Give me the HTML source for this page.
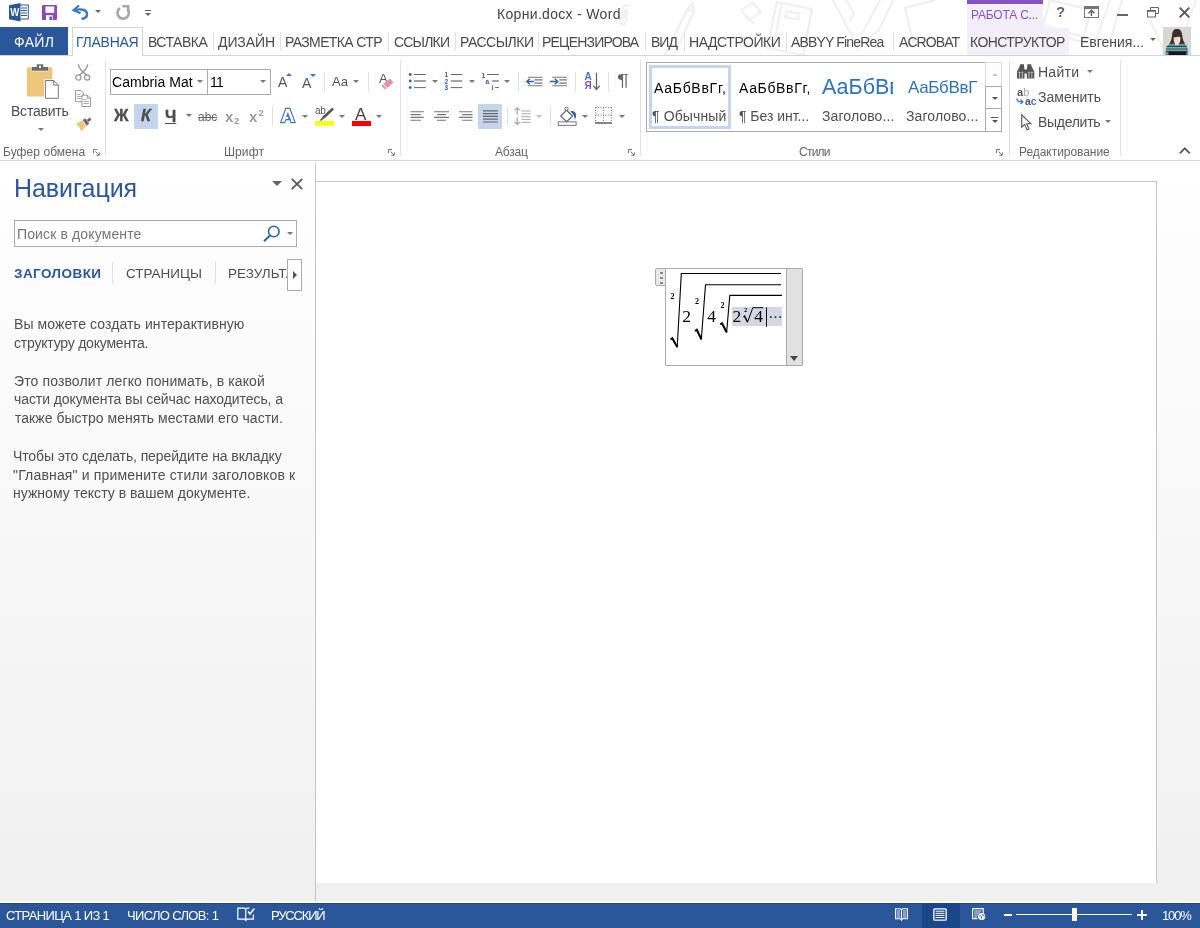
<!DOCTYPE html>
<html lang="ru">
<head>
<meta charset="utf-8">
<title>Корни.docx - Word</title>
<style>
*{box-sizing:border-box;margin:0;padding:0}
html,body{width:1200px;height:928px;overflow:hidden;background:#fff}
body{position:relative;font-family:"Liberation Sans",sans-serif;font-size:12px;color:#4e4e4e;-webkit-font-smoothing:antialiased}
.a{position:absolute}
.t{position:absolute;white-space:nowrap;line-height:1;will-change:transform}
svg{position:absolute;overflow:visible;will-change:transform}
/* title bar */
#title{left:0;top:0;width:1200px;height:28px;background:#fff}
#tabs{left:0;top:28px;width:1200px;height:27px;background:#fff}
#file{left:0;top:27px;width:68px;height:28px;background:#2b579a}
#home{z-index:2;left:72px;top:27px;width:71px;height:29px;background:#fff;border:1px solid #d4d4d4;border-bottom:none}
.tab{font-size:14px;color:#4a4a4a;top:35px}
.tsep{position:absolute;top:32px;width:1px;height:19px;background:#e1e1e1}
#ctxhead{left:967px;top:0;width:76px;height:28px;background:#f3effa;border-top:4px solid #8653c5}
#ctxtab{left:967px;top:28px;width:102px;height:27px;background:#f3effa}
/* ribbon */
#ribbon{left:0;top:55px;width:1200px;height:106px;background:#fff;border-top:1px solid #d4d4d4;border-bottom:1px solid #d4d4d4}
.gsep{position:absolute;top:60px;width:1px;height:96px;background:#e1e1e1}
.bsep{position:absolute;width:1px;height:20px;background:#e1e1e1}
.glabel{font-size:12px;color:#666;top:146px}
.hl{position:absolute;background:#c5d5ed}
.box{position:absolute;border:1px solid #ababab;background:#fff}
.arr{position:absolute;width:0;height:0;border-left:3px solid transparent;border-right:3px solid transparent;border-top:3px solid #777}
/* nav */
#nav{left:0;top:161px;width:315px;height:740px;background:linear-gradient(#fff 0,#f0f0f0 100%)}
#navline{left:315px;top:163px;width:1px;height:738px;background:#c6c6c6}
#docbg{left:316px;top:161px;width:884px;height:740px;background:linear-gradient(#fff 0,#f0f0f0 100%)}
#page{left:316px;top:181px;width:841px;height:702px;background:#fff;border-top:1px solid #c6c6c6;border-right:1px solid #c6c6c6}
.np{font-size:14px;color:#505050;left:14px}
/* status */
#status{left:0;top:903px;width:1200px;height:25px;background:#2b579a;border-top:1px solid #1f4a8d}
.st{font-size:13px;color:#fff;top:909px}
</style>
</head>
<body>
<!-- TITLE BAR -->
<div class="a" id="title"></div>
<div class="a" id="tabs"></div>
<svg style="left:600px;top:0" width="600" height="55" viewBox="600 0 600 55"><g fill="none" stroke="#efefef" stroke-width="2" stroke-linecap="round" stroke-linejoin="round">
<path d="M629 6c-3-2-6 0-6.500 3l-2 12c-.5 4 4 5 5 1l2-11c.3-2-2-2.500-2.400-.5l-1.500 8"/>
<path d="M692 3l-5 7l-22 45M692 3l2 8l-20 44M687 10l7 1"/>
<path d="M741 10l12-7l8 9l-12 8zM745 15l8 8"/>
<path d="M777 2l35 7l-9 46l-36-7zM782 3l-9 46M786 11l13 2.500l-1 6l-13-2.500z"/>
<path d="M833 0l22 42M846 0l8 14l-4 6M855 42l4 8"/>
<path d="M880 0l-18 34M893 0l-14 30l-15 12"/>
<path d="M905 8l30-8M905 8l8 34l24-6"/>
<path d="M1050 0l-8 30l40 12l9-32zM1046 26l38 11"/>
<path d="M1110 0l-14 40M1122 0l-12 42"/>
<path d="M1150 20l14 30M1196 0l-10 28"/>
</g></svg>
<div class="a" id="ctxhead"></div>
<div class="a" id="ctxtab"></div>
<span class="t" id="ttl" style="left:496.5px;top:6.9px;font-size:14px;color:#444;letter-spacing:0.32px">Корни.docx - Word</span>
<span class="t" id="ctxh" style="left:971.0px;top:9.0px;font-size:12px;color:#8653c5;letter-spacing:-0.20px">РАБОТА С...</span>

<!-- title icons -->
<svg style="left:9px;top:3px" width="20" height="19" viewBox="0 0 20 19"><rect x="10" y="2" width="9.3" height="14" fill="#fff" stroke="#2b579a" stroke-width="1"/><g stroke="#2b579a" stroke-width="1"><path d="M12 5h6M12 7.5h6M12 10h6M12 12.500h6"/></g><path d="M0 2.200L11.500 0v18.400L0 16.200z" fill="#2b579a"/><text x="1.300" y="13.200" font-family="Liberation Sans, sans-serif" font-weight="bold" font-size="10.500" fill="#fff" textLength="9" lengthAdjust="spacingAndGlyphs">W</text></svg>
<svg style="left:42px;top:5px" width="15" height="15" viewBox="0 0 15 15"><path d="M0 1a1 1 0 0 1 1-1h13a1 1 0 0 1 1 1v13a1 1 0 0 1-1 1H1a1 1 0 0 1-1-1z" fill="#8a4bb5"/><rect x="3.500" y="1.500" width="8.700" height="6.300" fill="#fff"/><rect x="4" y="10.200" width="6.700" height="4.800" fill="#fff"/><rect x="7.300" y="11.500" width="2.700" height="3.500" fill="#8a4bb5"/></svg>
<svg style="left:72px;top:5px" width="18" height="15" viewBox="0 0 18 15"><path d="M7 0.500L1.500 5.200L8.500 8.300" fill="none" stroke="#3a78c3" stroke-width="2.200"/><path d="M2.500 5c6-1.500 12.500-.5 12.500 4.200c0 3-2.500 4.300-5.500 4.600" fill="none" stroke="#3a78c3" stroke-width="2.400"/></svg>
<div class="arr" style="left:95px;top:10px;border-top-color:#666"></div>
<svg style="left:115px;top:5px" width="16" height="15" viewBox="0 0 16 15"><path d="M5 3.200A5.700 5.700 0 1 0 12.300 4" fill="none" stroke="#a6a6a6" stroke-width="2.600"/><path d="M7.500 1.300h5.800v5.800" fill="none" stroke="#a6a6a6" stroke-width="2.400"/></svg>
<div class="a" style="left:145px;top:10px;width:6px;height:1px;background:#666"></div>
<div class="arr" style="left:145px;top:13px;border-top-color:#666"></div>
<!-- window controls -->
<span class="t" id="w_help" style="left:1056px;top:4px;font-size:15px;font-weight:bold;color:#666">?</span>
<svg style="left:1084px;top:6px" width="15" height="12" viewBox="0 0 15 12"><rect x=".5" y=".5" width="14" height="11" fill="none" stroke="#777"/><rect x="1" y="1" width="13" height="2" fill="#777"/><path d="M7.500 10V4.500M4.500 7.300L7.500 4.300L10.500 7.300" fill="none" stroke="#666" stroke-width="1.500"/></svg>
<div class="a" style="left:1117px;top:14px;width:11px;height:2px;background:#666"></div>
<svg style="left:1147px;top:7px" width="12" height="11" viewBox="0 0 12 11"><path d="M3.500 3V.500h8v6h-2.500" fill="none" stroke="#666"/><rect x=".5" y="3.500" width="8" height="6.500" fill="none" stroke="#666"/><path d="M0 4h9" stroke="#666" stroke-width="1.500"/></svg>
<svg style="left:1179px;top:7px" width="11" height="11" viewBox="0 0 11 11"><path d="M.7.700l9.600 9.600M10.300.700L.7 10.300" stroke="#555" stroke-width="1.800"/></svg>
<div class="arr" style="left:1150px;top:38px;border-top-color:#666"></div>
<!-- avatar -->
<svg style="left:1162.500px;top:27px" width="28" height="28" viewBox="0 0 28 28"><rect width="28" height="28" fill="#d8d7d4"/><path d="M14 1.800c-3.500 0-4.800 3-5 7c-.2 3.500-1.200 5.800-2.700 7.800l4 1h8l3.700-1c-1.600-2.200-2.400-4.500-2.700-7.800c-.4-4-1.800-7-5.300-7z" fill="#3b2f2b"/><path d="M10.800 10.200c1.500-.8 4-1 6.500-.2c.3 2.500 0 5-1 6.300l-1 2h-3l-.8-2.300c-.8-1.800-.9-3.800-.7-5.800z" fill="#f1dcd1"/><path d="M9.500 8.500c1-2.500 3-3.500 5-3.300c2 .2 3.300 1.800 3.600 4.500c-1.800-.3-3.300-.2-4.300.3c-1.300.6-2.800.6-4.300-1.500z" fill="#3b2f2b"/><path d="M2.500 28c0-5 .8-9 3.500-11l4.500-.6c1 2.200 6.500 2.200 7.800 0l4.200.8c2 1.800 2.500 6 2.500 10.800z" fill="#4f9aa0"/><path d="M3.500 19.500h20M3 22h21.500M2.800 24.300h22" stroke="#3a3f4a" stroke-width="1.100"/><path d="M4 20.800h19.500M3 23.200h21.500" stroke="#9ad4d4" stroke-width=".6"/><path d="M5.500 28v-3.500h17.800v3.500z" fill="#14161a"/></svg>

<!-- TABS -->
<div class="a" id="file"></div>
<span class="t tab" id="tb0" style="left:13.5px;color:#fff;letter-spacing:0.33px">ФАЙЛ</span>
<div class="a" id="home"></div>
<span class="t tab" id="tb1" style="z-index:3;left:75.5px;color:#2b579a;letter-spacing:-0.25px">ГЛАВНАЯ</span>
<span class="t tab" id="tb2" style="left:147.5px;letter-spacing:-0.50px">ВСТАВКА</span>
<span class="t tab" id="tb3" style="left:218.0px;letter-spacing:-0.10px">ДИЗАЙН</span>
<span class="t tab" id="tb4" style="left:284.5px;letter-spacing:-0.64px">РАЗМЕТКА СТР</span>
<span class="t tab" id="tb5" style="left:393.5px;letter-spacing:-0.80px">ССЫЛКИ</span>
<span class="t tab" id="tb6" style="left:459.5px;letter-spacing:-0.50px">РАССЫЛКИ</span>
<span class="t tab" id="tb7" style="left:542.0px;letter-spacing:-0.80px">РЕЦЕНЗИРОВА</span>
<span class="t tab" id="tb8" style="left:650.5px;letter-spacing:-1.00px">ВИД</span>
<span class="t tab" id="tb9" style="left:688.5px;letter-spacing:-0.44px">НАДСТРОЙКИ</span>
<span class="t tab" id="tb10" style="left:790.5px;letter-spacing:-0.83px">ABBYY FineRea</span>
<span class="t tab" id="tb11" style="left:898.5px;letter-spacing:-0.92px">ACROBAT</span>
<span class="t tab" id="tb12" style="left:969.5px;letter-spacing:-0.60px">КОНСТРУКТОР</span>
<span class="t tab" id="tb13" style="left:1080.0px;letter-spacing:-0.01px">Евгения...</span>

<div class="tsep" style="left:213px"></div>
<div class="tsep" style="left:280px"></div>
<div class="tsep" style="left:388px"></div>
<div class="tsep" style="left:455px"></div>
<div class="tsep" style="left:538px"></div>
<div class="tsep" style="left:645px"></div>
<div class="tsep" style="left:684px"></div>
<div class="tsep" style="left:786px"></div>
<div class="tsep" style="left:893px"></div>

<!-- RIBBON -->
<div class="a" id="ribbon"></div>
<div class="gsep" style="left:105px"></div>
<div class="gsep" style="left:400px"></div>
<div class="gsep" style="left:640px"></div>
<div class="gsep" style="left:1009px"></div>
<div class="gsep" style="left:1120px"></div>
<!-- clipboard group -->
<span class="t" id="r_paste" style="left:10.5px;top:103.9px;font-size:14px;letter-spacing:-0.22px">Вставить</span>
<div class="arr" style="left:38px;top:128px"></div>
<span class="t glabel" id="g_clip" style="left:2.5px;letter-spacing:0.06px">Буфер обмена</span>
<!-- clipboard icons -->
<svg style="left:27px;top:64px" width="33" height="36" viewBox="0 0 33 36"><rect x="0" y="3.200" width="25.400" height="29.200" rx="1.200" fill="#edc67a"/><path d="M5 3h16v4.200H5z" fill="#6a6a6a"/><path d="M9.700 0.300h6.600v3H9.700z" fill="#6a6a6a"/><rect x="12" y="1.800" width="2" height="2" fill="#fff"/><path d="M4.700 7.200h16.600" stroke="#f7e6c4" stroke-width="1"/><path d="M17 15.300h10.500l5 5V35.500H17z" fill="#fff"/><path d="M18.400 16.500h8.300l4.600 4.600v13.200H18.400z" fill="#fff" stroke="#777" stroke-width="1"/><path d="M26.700 16.500v4.600h4.600" fill="none" stroke="#777" stroke-width="1"/></svg>
<svg style="left:75px;top:64px" width="16" height="17" viewBox="0 0 16 17"><path d="M3.300 0.300C3.600 4 5.500 6.500 12 11.500M12.700 0.300C12.400 4 10.500 6.500 4 11.500" fill="none" stroke="#9a9a9a" stroke-width="1.500"/><circle cx="3.400" cy="13.500" r="2.600" fill="none" stroke="#9a9a9a" stroke-width="1.300"/><circle cx="12.100" cy="13.500" r="2.600" fill="none" stroke="#9a9a9a" stroke-width="1.300"/></svg>
<svg style="left:75px;top:90px" width="17" height="17" viewBox="0 0 17 17"><path d="M.5.500h5.500l2.500 2.500v8.800H.5z" fill="#fff" stroke="#9a9a9a"/><path d="M2 4.500h3M2 6.500h5M2 8.500h4" stroke="#b0b0b0"/><path d="M7 5.200h5.500l3 3v8.300H7z" fill="#fff" stroke="#9a9a9a"/><path d="M12.500 5.200v3h3" fill="none" stroke="#9a9a9a"/><path d="M8.500 9.500h3M8.500 11.500h5.500M8.500 13.500h5.500" stroke="#b0b0b0"/></svg>
<svg style="left:75px;top:117px" width="17" height="15" viewBox="0 0 17 15"><path d="M1 7l6.200-3.700l3.800 5.400L6.500 14.300c-1.500-2.800-3-5.300-5.500-7.300z" fill="#edc67a"/><path d="M7.500 3l2.800-1.800l4 5.500l-2.800 2z" fill="#6a6a6a"/><path d="M11.800 2.700l3-2.200l1.700 2.300l-3 2.200z" fill="#6a6a6a"/><path d="M7.300 3.300l3.800 5.300" stroke="#fff" stroke-width=".8"/></svg>
<!-- font group -->
<div class="box" style="left:110px;top:69px;width:98px;height:26px"></div>
<div class="box" style="left:207px;top:69px;width:64px;height:26px"></div>
<span class="t" id="r_font" style="left:112.0px;top:75.2px;font-size:14px;color:#000;letter-spacing:0.05px">Cambria Mat</span>
<div class="arr" style="left:197px;top:80px"></div>
<span class="t" id="r_size" style="left:210px;top:75.2px;font-size:14px;color:#000;letter-spacing:-0.80px">11</span>
<div class="arr" style="left:260px;top:80px"></div>
<div class="bsep" style="left:324px;top:72px"></div>
<div class="bsep" style="left:368px;top:72px"></div>
<div class="hl" style="left:134px;top:104px;width:24px;height:25px"></div>
<span class="t" id="r_b" style="left:114.0px;top:108.3px;font-size:16px;font-weight:bold;-webkit-text-stroke:.35px #4e4e4e;letter-spacing:0.00px">Ж</span>
<span class="t" id="r_i" style="left:140.5px;top:108.3px;font-size:16px;font-weight:bold;-webkit-text-stroke:.35px #4e4e4e;font-style:italic;letter-spacing:0.00px">К</span>
<span class="t" id="r_u" style="left:165px;top:109px;font-size:16px;font-weight:bold;-webkit-text-stroke:.35px #4e4e4e;text-decoration:underline">Ч</span>
<div class="arr" style="left:186px;top:114px"></div>
<span class="t" id="r_abc" style="left:198.0px;top:111.4px;font-size:12px;text-decoration:line-through;color:#666;letter-spacing:0.00px">abc</span>
<span class="t" id="r_sub" style="left:225.0px;top:108.9px;font-size:15px;font-weight:bold;color:#999;letter-spacing:0.40px">x<span style="font-size:9px;position:relative;top:2px;left:.5px">2</span></span>
<span class="t" id="r_sup" style="left:249.0px;top:108.9px;font-size:15px;font-weight:bold;color:#999;letter-spacing:1.00px">x<span style="font-size:9px;position:relative;top:-6px;left:.5px">2</span></span>
<div class="bsep" style="left:272px;top:106px"></div>
<span class="t glabel" id="g_font" style="left:224.0px;letter-spacing:0.10px">Шрифт</span>
<!-- font icons -->
<span class="t" id="i_grow" style="left:278.3px;top:75.3px;font-size:14px;color:#555;letter-spacing:0.00px">A</span>
<svg style="left:286px;top:73px" width="6" height="3" viewBox="0 0 6 3"><path d="M0 3L3 0L6 3z" fill="#3a78c3"/></svg>
<span class="t" id="i_shr" style="left:301.5px;top:76.2px;font-size:14px;color:#555;letter-spacing:0.00px">A</span>
<svg style="left:309.500px;top:74px" width="6" height="3" viewBox="0 0 6 3"><path d="M0 0h6L3 3z" fill="#3a78c3"/></svg>
<span class="t" id="i_aa" style="left:332.2px;top:75.0px;font-size:13px;color:#555;letter-spacing:0.20px">Aa</span>
<div class="arr" style="left:353px;top:80px"></div>
<span class="t" id="i_clr" style="left:379.1px;top:72.0px;font-size:13px;color:#555;letter-spacing:0.00px">A</span>
<svg style="left:380px;top:77px" width="14" height="13" viewBox="0 0 14 13"><g transform="rotate(-40 7.500 7)"><rect x="2" y="4.300" width="11" height="5.400" rx="1" fill="#e8909c"/><path d="M4.200 4.300v5.400" stroke="#fff" stroke-width=".9"/></g></svg>
<span class="t" id="i_fx" style="left:280.500px;top:106px;font-size:19px;font-weight:bold;color:#fff;-webkit-text-stroke:2.400px #3a78c3;paint-order:stroke fill">A</span>
<div class="a" style="left:287px;top:116px;width:0;height:0;border-left:2px solid transparent;border-right:2px solid transparent;border-bottom:4px solid #3a78c3"></div>
<div class="arr" style="left:302px;top:115px"></div>
<span class="t" id="i_ab" style="left:315px;top:106px;font-size:10px;color:#555;letter-spacing:-.3px">ab</span>
<svg style="left:315px;top:108px" width="20" height="18" viewBox="0 0 20 18"><path d="M17.300 1.300L8.800 9.300" stroke="#555" stroke-width="2.600" stroke-linecap="round"/><path d="M8.300 9.800L5.500 12.500" stroke="#555" stroke-width="1.600"/><rect x="0" y="13" width="19" height="4.700" fill="#ffff00"/></svg>
<div class="arr" style="left:339px;top:115px"></div>
<span class="t" id="i_fc" style="left:355.0px;top:105.6px;font-size:17px;color:#444;letter-spacing:0.00px">A</span>
<div class="a" style="left:351.500px;top:121px;width:19px;height:4.700px;background:#ff0000"></div>
<div class="arr" style="left:376px;top:115px"></div>
<!-- paragraph group -->
<div class="bsep" style="left:518px;top:72px"></div>
<div class="bsep" style="left:575px;top:72px"></div>
<div class="bsep" style="left:608px;top:72px"></div>
<div class="bsep" style="left:507px;top:106px"></div>
<div class="bsep" style="left:550px;top:106px"></div>
<div class="hl" style="left:478px;top:104px;width:24px;height:25px"></div>
<span class="t glabel" id="g_par" style="left:495.0px;letter-spacing:-0.20px">Абзац</span>
<!-- paragraph icons -->
<svg style="left:408px;top:72px" width="20" height="18" viewBox="0 0 20 18"><g fill="#2b64ad"><circle cx="2.200" cy="2.500" r="1.400"/><circle cx="2.200" cy="9" r="1.400"/><circle cx="2.200" cy="15.600" r="1.400"/></g><path d="M6 2.500h11.800M6 15.600h11.800" stroke="#666" stroke-width="1"/><path d="M6 9h11.800" stroke="#8a8a8a" stroke-width="1.600"/></svg>
<div class="arr" style="left:432px;top:80px"></div>
<svg style="left:444px;top:72px" width="20" height="18" viewBox="0 0 20 18"><g font-family="Liberation Sans, sans-serif" font-size="6.500" font-weight="bold" fill="#2b64ad"><text x=".5" y="5">1</text><text x=".5" y="11.500">2</text><text x=".5" y="18">3</text></g><path d="M6.800 2.500h11.400M6.800 15.600h11.400" stroke="#666" stroke-width="1"/><path d="M6.800 9h11.400" stroke="#8a8a8a" stroke-width="1.600"/></svg>
<div class="arr" style="left:469px;top:80px"></div>
<svg style="left:481px;top:72px" width="20" height="18" viewBox="0 0 20 18"><g font-family="Liberation Sans, sans-serif" font-size="6.500" font-weight="bold" fill="#2b64ad"><text x=".5" y="5.500">1</text><text x="4.500" y="11.500">a</text><text x="10.500" y="18">i</text></g><path d="M6.200 2.500h11.800M14 15.600h4" stroke="#666" stroke-width="1"/><path d="M11.200 9h6.800" stroke="#8a8a8a" stroke-width="1.600"/></svg>
<div class="arr" style="left:503.500px;top:80px"></div>
<svg style="left:526px;top:76px" width="18" height="11" viewBox="0 0 18 11"><path d="M2 1.200h14.500M8.400 3.900h8.100M8.400 7.100h8.100M2 9.800h14.500" stroke="#777" stroke-width="1.100"/><path d="M8 5.500H1M3.800 2.700L.8 5.500l3 2.800" fill="none" stroke="#2b64ad" stroke-width="1.500"/></svg>
<svg style="left:550px;top:76px" width="18" height="11" viewBox="0 0 18 11"><path d="M2.300 1.200h14.600M9.300 3.900h7.600M9.300 7.100h7.600M2.300 9.800h14.600" stroke="#777" stroke-width="1.100"/><path d="M0 5.500H7.500M4.800 2.700l3 2.800l-3 2.800" fill="none" stroke="#2b64ad" stroke-width="1.500"/></svg>
<svg style="left:584px;top:72px" width="17" height="19" viewBox="0 0 17 19"><g font-family="Liberation Sans, sans-serif" font-size="10" font-weight="bold"><text x=".6" y="8.200" fill="#3a78c3">A</text><text x=".6" y="17" fill="#8a4bb5">Я</text></g><path d="M12.500 .8v16.500M9.300 13.800l3.200 3.600l3.200-3.600" fill="none" stroke="#666" stroke-width="1.300"/></svg>
<span class="t" id="i_pil" style="left:617px;top:73px;font-size:16px;color:#666;transform:scaleX(1.4);transform-origin:0 0">¶</span>
<svg style="left:410px;top:111px" width="14" height="10" viewBox="0 0 14 10"><path d="M.5 .8h13.300M.5 3.600h10.300M.5 6.400h13.300M.5 9.200h10.300" stroke="#777" stroke-width="1.100"/></svg>
<svg style="left:434px;top:111px" width="15" height="10" viewBox="0 0 15 10"><path d="M0 .8h15M3 3.600h9M0 6.400h15M3 9.200h9" stroke="#777" stroke-width="1.100"/></svg>
<svg style="left:459px;top:111px" width="14" height="10" viewBox="0 0 14 10"><path d="M.2 .8h13.300M3.200 3.600h10.300M.2 6.400h13.300M3.200 9.200h10.300" stroke="#777" stroke-width="1.100"/></svg>
<svg style="left:483px;top:109.500px" width="15" height="13" viewBox="0 0 15 13"><path d="M0 .8h14.800M0 3.600h14.800M0 6.400h14.800M0 9.200h14.800M0 12h14.800" stroke="#666" stroke-width="1.200"/></svg>
<svg style="left:514px;top:107px" width="17" height="18" viewBox="0 0 17 18"><path d="M3.200 .8v7M.6 3.400L3.200 .8l2.600 2.600M3.200 17.500v-7M.6 14.900l2.600 2.600l2.600-2.600" fill="none" stroke="#a8a8a8" stroke-width="1.300"/><path d="M7.400 4h9.200M7.400 6.800h9.200M7.400 9.700h9.200M7.400 12.400h9.200M7.400 15.300h9.200" stroke="#a8a8a8" stroke-width="1"/></svg>
<div class="arr" style="left:536px;top:115px;border-top-color:#bdbdbd"></div>
<svg style="left:557px;top:106px" width="21" height="20" viewBox="0 0 21 20"><rect x="1.300" y="15.800" width="17.800" height="3.600" fill="#fff" stroke="#777" stroke-width="1"/><path d="M9.500 4.200l6 5.800l-5.800 5.600l-6-5.600z" fill="#fff" stroke="#666" stroke-width="1.200"/><circle cx="9.500" cy="2.800" r="1.700" fill="#fff" stroke="#666" stroke-width="1"/><path d="M9.800 4.200l2.500 2.800" stroke="#666" stroke-width="1"/><path d="M13.300 5.200c3.400-.9 6 1.200 5.800 4.600c-.1 1.700-.7 3-1.500 3.900c.2-2.800-.8-5-2.600-6.500z" fill="#2b64ad"/></svg>
<div class="arr" style="left:582px;top:115px"></div>
<svg style="left:595px;top:107px" width="17" height="17" viewBox="0 0 17 17"><path d="M.5 .5h16M.5 8h16M.5 .5v15M8.400 .5v15M16.300 .5v15" fill="none" stroke="#777" stroke-width="1" stroke-dasharray="1 1.500"/><path d="M0 16h17" stroke="#666" stroke-width="1.600"/></svg>
<div class="arr" style="left:618.500px;top:115px"></div>
<!-- styles group -->
<div class="box" style="left:646px;top:62px;width:356px;height:70px"></div>
<div class="a" style="left:649px;top:65px;width:82px;height:64px;border:3px solid #c5d5ed;background:#fff"></div>
<span class="t" id="s1a" style="left:654.0px;top:81.2px;font-size:14px;color:#000;letter-spacing:0.72px">АаБбВвГг,</span>
<span class="t" id="s1b" style="left:652.0px;top:108.9px;font-size:14px;letter-spacing:0.13px">¶ Обычный</span>
<span class="t" id="s2a" style="left:739.0px;top:81.2px;font-size:14px;color:#000;letter-spacing:0.65px">АаБбВвГг,</span>
<span class="t" id="s2b" style="left:739.0px;top:108.9px;font-size:14px;letter-spacing:-0.03px">¶ Без инт...</span>
<div class="a" style="left:820px;top:70px;width:73px;height:34px;overflow:hidden"><span class="t" id="s3a" style="left:2px;top:7px;font-size:21.5px;color:#2e74b5">АаБбВвГ</span></div>
<span class="t" id="s3b" style="left:822.0px;top:108.9px;font-size:14px;letter-spacing:0.10px">Заголово...</span>
<span class="t" id="s4a" style="left:907.5px;top:78.6px;font-size:17px;color:#2e74b5;letter-spacing:-0.34px">АаБбВвГ</span>
<span class="t" id="s4b" style="left:906.0px;top:108.9px;font-size:14px;letter-spacing:0.10px">Заголово...</span>
<span class="t glabel" id="g_sty" style="left:799.0px;letter-spacing:-0.75px">Стили</span>
<!-- editing group -->
<span class="t" id="e1" style="left:1037.5px;top:64.9px;font-size:14px;letter-spacing:0.25px">Найти</span>
<span class="t" id="e2" style="left:1037.5px;top:89.9px;font-size:14px;letter-spacing:0.01px">Заменить</span>
<span class="t" id="e3" style="left:1037.5px;top:114.9px;font-size:14px;letter-spacing:-0.29px">Выделить</span>
<div class="arr" style="left:1087px;top:70px"></div>
<div class="arr" style="left:1105px;top:120px"></div>
<!-- launchers -->
<svg style="left:93px;top:148.500px" width="7" height="7" viewBox="0 0 7 7"><path d="M.5 4V.5H4" fill="none" stroke="#777" stroke-width="1"/><path d="M2.500 2.500l3.500 3.500M6.300 3.300v3h-3" fill="none" stroke="#777" stroke-width="1"/></svg>
<svg style="left:388px;top:148.500px" width="7" height="7" viewBox="0 0 7 7"><path d="M.5 4V.5H4" fill="none" stroke="#777" stroke-width="1"/><path d="M2.500 2.500l3.500 3.500M6.300 3.300v3h-3" fill="none" stroke="#777" stroke-width="1"/></svg>
<svg style="left:628px;top:148.500px" width="7" height="7" viewBox="0 0 7 7"><path d="M.5 4V.5H4" fill="none" stroke="#777" stroke-width="1"/><path d="M2.500 2.500l3.500 3.500M6.300 3.300v3h-3" fill="none" stroke="#777" stroke-width="1"/></svg>
<svg style="left:996px;top:148.500px" width="7" height="7" viewBox="0 0 7 7"><path d="M.5 4V.5H4" fill="none" stroke="#777" stroke-width="1"/><path d="M2.500 2.500l3.500 3.500M6.300 3.300v3h-3" fill="none" stroke="#777" stroke-width="1"/></svg>
<!-- gallery scroll -->
<div class="a" style="left:985px;top:62px;width:17px;height:25px;border:1px solid #dedede;background:#fdfdfd"></div>
<div class="a" style="left:985px;top:86px;width:17px;height:23px;border:1px solid #ababab;background:#fff"></div>
<div class="a" style="left:985px;top:108px;width:17px;height:24px;border:1px solid #ababab;background:#fff"></div>
<div class="a" style="left:991.500px;top:73px;width:0;height:0;border-left:3px solid transparent;border-right:3px solid transparent;border-bottom:3px solid #c8c8c8"></div>
<div class="arr" style="left:991.500px;top:96.500px;border-top-color:#555"></div>
<div class="a" style="left:991px;top:117px;width:7px;height:1px;background:#555"></div>
<div class="arr" style="left:991.500px;top:120px;border-top-color:#555"></div>
<!-- editing icons -->
<svg style="left:1017px;top:64px" width="18" height="15" viewBox="0 0 18 15"><path d="M0 14.500V7.500L3 1.800V.3h4v1.500l.5 3.500v9.200zM17.300 14.500V7.500L14.300 1.800V.3h-4v1.500l-.5 3.500v9.200z" fill="#555"/><rect x="7" y="5.500" width="3.300" height="4" fill="#555"/><path d="M2.500 8v6M5.300 8v6M12 8v6M14.800 8v6" stroke="#d0d0d0" stroke-width=".8"/><path d="M.8 8.300h5.800M10.700 8.300h5.800" stroke="#bbb" stroke-width=".7"/></svg>
<span class="t" id="i_rab" style="left:1016.500px;top:86.500px;font-size:11px;color:#555;font-weight:bold">a<span style="color:#a8a8a8;font-weight:normal">b</span></span>
<span class="t" id="i_rac" style="left:1025px;top:96px;font-size:10.500px;color:#555;font-weight:bold">a<span style="color:#3a78c3">c</span></span>
<svg style="left:1016px;top:98px" width="8" height="7" viewBox="0 0 8 7"><path d="M1 .3c-.5 2.500 1 3.700 5.500 3.500M4.500 1.500l2.300 2.300l-2.300 2.300" fill="none" stroke="#3a78c3" stroke-width="1.300"/></svg>
<svg style="left:1021px;top:114px" width="11" height="17" viewBox="0 0 11 17"><path d="M.7 .8v12.400l3-2.800l2.300 5.300l2-.9l-2.300-5.100h4.100z" fill="#fff" stroke="#555" stroke-width="1.100" stroke-linejoin="miter"/></svg>
<!-- collapse ribbon -->
<svg style="left:1179px;top:147px" width="12" height="7" viewBox="0 0 12 7"><path d="M.8 6.300L5.800 1.300l5 5" fill="none" stroke="#555" stroke-width="1.700"/></svg>
<span class="t glabel" id="g_edit" style="left:1018.5px;letter-spacing:-0.05px">Редактирование</span>

<!-- NAV PANE -->
<div class="a" id="nav"></div>
<div class="a" id="docbg"></div>
<div class="a" id="navline"></div>
<div class="a" id="page"></div>
<span class="t" id="n_title" style="left:13.5px;top:176.3px;font-size:25px;color:#2b579a;letter-spacing:-0.05px">Навигация</span>
<div class="box" style="left:14px;top:220px;width:283px;height:27px"></div>
<span class="t" id="n_search" style="left:16.5px;top:227.2px;font-size:14px;color:#777;letter-spacing:0.13px">Поиск в документе</span>
<div class="arr" style="left:287px;top:232px"></div>
<!-- nav icons -->
<div class="a" style="left:272px;top:181px;width:0;height:0;border-left:5px solid transparent;border-right:5px solid transparent;border-top:5px solid #666"></div>
<svg style="left:291px;top:178px" width="12" height="12" viewBox="0 0 12 12"><path d="M.8 .8l10.400 10.400M11.200 .8L.8 11.200" stroke="#555" stroke-width="1.700"/></svg>
<svg style="left:263px;top:225px" width="18" height="17" viewBox="0 0 18 17"><circle cx="10.800" cy="6.500" r="5.300" fill="none" stroke="#2b64ad" stroke-width="1.600"/><path d="M7 10.500L1 16.200" stroke="#2b64ad" stroke-width="2"/></svg>
<span class="t" id="n_t1" style="left:13.5px;top:266.9px;font-size:13.5px;font-weight:bold;color:#2b579a;letter-spacing:0.44px">ЗАГОЛОВКИ</span>
<div class="bsep" style="left:112px;top:262px;height:22px"></div>
<span class="t" id="n_t2" style="left:125.5px;top:266.9px;font-size:13.5px;letter-spacing:-0.02px">СТРАНИЦЫ</span>
<div class="bsep" style="left:215px;top:262px;height:22px"></div>
<div class="a" style="left:226px;top:262px;width:62px;height:22px;overflow:hidden"><span class="t" id="n_t3" style="left:2px;top:5px;font-size:13.5px">РЕЗУЛЬТАТЫ</span></div>
<div class="box" style="left:287px;top:259px;width:15px;height:32px"></div>
<div class="a" style="left:293px;top:271px;width:0;height:0;border-top:4px solid transparent;border-bottom:4px solid transparent;border-left:4px solid #555"></div>
<span class="t np" id="n_p1" style="top:317.3px;left:13.5px;letter-spacing:0.09px">Вы можете создать интерактивную</span>
<span class="t np" id="n_p2" style="top:336.0px;left:13.5px;letter-spacing:-0.21px">структуру документа.</span>
<span class="t np" id="n_p3" style="top:373.5px;left:13.5px;letter-spacing:0.12px">Это позволит легко понимать, в какой</span>
<span class="t np" id="n_p4" style="top:392.3px;left:13.5px;letter-spacing:-0.08px">части документа вы сейчас находитесь, а</span>
<span class="t np" id="n_p5" style="top:411.0px;left:14.5px;letter-spacing:0.03px">также быстро менять местами его части.</span>
<span class="t np" id="n_p6" style="top:448.8px;left:13.4px;letter-spacing:-0.11px">Чтобы это сделать, перейдите на вкладку</span>
<span class="t np" id="n_p7" style="top:467.5px;left:13.4px;letter-spacing:0.17px">"Главная" и примените стили заголовков к</span>
<span class="t np" id="n_p8" style="top:486.3px;left:13.4px;letter-spacing:0.03px">нужному тексту в вашем документе.</span>

<!-- EQUATION -->
<div class="a" style="left:655px;top:268px;width:11px;height:18px;background:#e9e9e9;border:1px solid #ababab;border-radius:2px 0 0 2px"></div>
<div class="a" style="left:660px;top:271.500px;width:3px;height:2px;background:#8a8a8a;box-shadow:0 5px 0 #8a8a8a,0 10px 0 #8a8a8a"></div>
<div class="a" id="eq" style="left:665px;top:268px;width:138px;height:97.500px;background:#fff;border:1px solid #ababab;border-radius:1px"></div>
<div class="a" style="left:786px;top:269px;width:16px;height:95.500px;background:#e1e1e1;border-left:1px solid #ababab"></div>
<div class="a" style="left:790px;top:355.500px;width:0;height:0;border-left:4.500px solid transparent;border-right:4.500px solid transparent;border-top:5px solid #444"></div>
<div class="a" style="left:732px;top:306.500px;width:50px;height:19px;background:#d3d8e4"></div>
<svg style="left:665px;top:268px" width="122" height="97" viewBox="665 268 122 97">
<g fill="none" stroke="#000" stroke-linejoin="miter">
<path d="M670.500 339.500L672.300 338.200L677.200 347" stroke-width="2"/><path d="M677.200 347.500L681.300 273.500H781" stroke-width="1.100"/>
<path d="M695 331L696.800 329.800L701.300 339.300" stroke-width="2"/><path d="M701.300 339.800L705.500 284.800H781" stroke-width="1.100"/>
<path d="M720.300 324.500L722 323.300L726.600 332.200" stroke-width="2"/><path d="M726.600 332.600L729.800 295.400H782" stroke-width="1.100"/>
<path d="M743.500 317L744.600 316.200L747.500 322" stroke-width="1.500"/><path d="M747.500 322.300L752.800 307.700H763.200" stroke-width="1"/>
<path d="M766.500 307.300V326.700" stroke-width="1"/>
</g>
<g font-family="Liberation Serif, serif" fill="#000">
<text x="682.300" y="322.300" font-size="17.500">2</text>
<text x="707.300" y="322.300" font-size="17.500">4</text>
<text x="732.500" y="322.300" font-size="17.500">2</text>
<text x="754.300" y="322.300" font-size="17.500">4</text>
<g font-size="8" font-weight="bold">
<text x="670.500" y="298.700">2</text>
<text x="695" y="304">2</text>
<text x="720.500" y="308.400">2</text>
<text x="744" y="312.400" font-size="6.500">2</text>
</g>
</g>
<g fill="#222"><rect x="770" y="316.300" width="1.600" height="1.600"/><rect x="774.700" y="316.300" width="1.600" height="1.600"/><rect x="779.400" y="316.300" width="1.600" height="1.600"/></g>
</svg>

<!-- STATUS BAR -->
<div class="a" id="status"></div>
<span class="t st" id="st1" style="left:5.6px;letter-spacing:-0.65px">СТРАНИЦА 1 ИЗ 1</span>
<span class="t st" id="st2" style="left:127.0px;letter-spacing:-0.67px">ЧИСЛО СЛОВ: 1</span>
<span class="t st" id="st3" style="left:270.8px;letter-spacing:-1.17px">РУССКИЙ</span>
<div class="a" style="left:922px;top:903px;width:38px;height:25px;background:#19478a"></div>
<!-- status icons -->
<svg style="left:237px;top:907px" width="19" height="15" viewBox="0 0 19 15"><path d="M.8 1.200h6.700l1.200 1.200v10.800l-1.200-1H.8zM8.700 2.400l1.200-1.200h2.500M8.700 13.200l1.200-1h6.500V7.500" fill="none" stroke="#fff" stroke-width="1.200"/><path d="M11 4.500l2 2.500l4.300-5.500" fill="none" stroke="#fff" stroke-width="1.500"/></svg>
<svg style="left:895px;top:908px" width="13" height="13" viewBox="0 0 13 13"><path d="M.6 .8h4.700l1.200 1v9.700l-1.200-.8H.6zM12.400 .8H7.700l-1.200 1v9.700l1.200-.8h4.700z" fill="none" stroke="#fff" stroke-width="1.100"/><path d="M1.800 3h3.300M1.800 5h3.300M1.800 7h3.300M1.800 9h3.300M7.900 3h3.300M7.900 5h3.300M7.900 7h3.300M7.900 9h3.300" stroke="#fff" stroke-width=".9"/><path d="M6.500 1.800v10.800" stroke="#fff" stroke-width="1"/></svg>
<svg style="left:933px;top:908px" width="14" height="13" viewBox="0 0 14 13"><rect x=".8" y=".8" width="12.400" height="11.400" rx="1" fill="none" stroke="#fff" stroke-width="1.300"/><path d="M2.500 3.200h9M2.500 5.300h9M2.500 7.400h9M2.500 9.500h9" stroke="#fff" stroke-width="1"/></svg>
<svg style="left:972px;top:908px" width="15" height="13" viewBox="0 0 15 13"><path d="M.6 .6h10.600v5M.6 .6v10h5" fill="none" stroke="#fff" stroke-width="1.200"/><path d="M2.300 3h7M2.300 5h6M2.300 7h3.500M2.300 9h3" stroke="#fff" stroke-width=".9"/><circle cx="9.700" cy="8.500" r="3.600" fill="#fff"/><path d="M7.800 7.200l1.500 1.500l.3 2M10.500 6l.5 1.500l1.700.8" fill="none" stroke="#2b579a" stroke-width="1"/></svg>
<div class="a" style="left:1003.500px;top:913.500px;width:8px;height:2px;background:#fff"></div>
<div class="a" style="left:1015.500px;top:914px;width:116.500px;height:1px;background:#fff"></div>
<div class="a" style="left:1071.500px;top:908px;width:5.300px;height:13px;background:#fff"></div>
<div class="a" style="left:1137px;top:913.500px;width:10px;height:2px;background:#fff"></div>
<div class="a" style="left:1141px;top:910px;width:2px;height:10px;background:#fff"></div>
<span class="t st" id="st4" style="left:1162.4px;letter-spacing:-1.12px">100%</span>
</body>
</html>
